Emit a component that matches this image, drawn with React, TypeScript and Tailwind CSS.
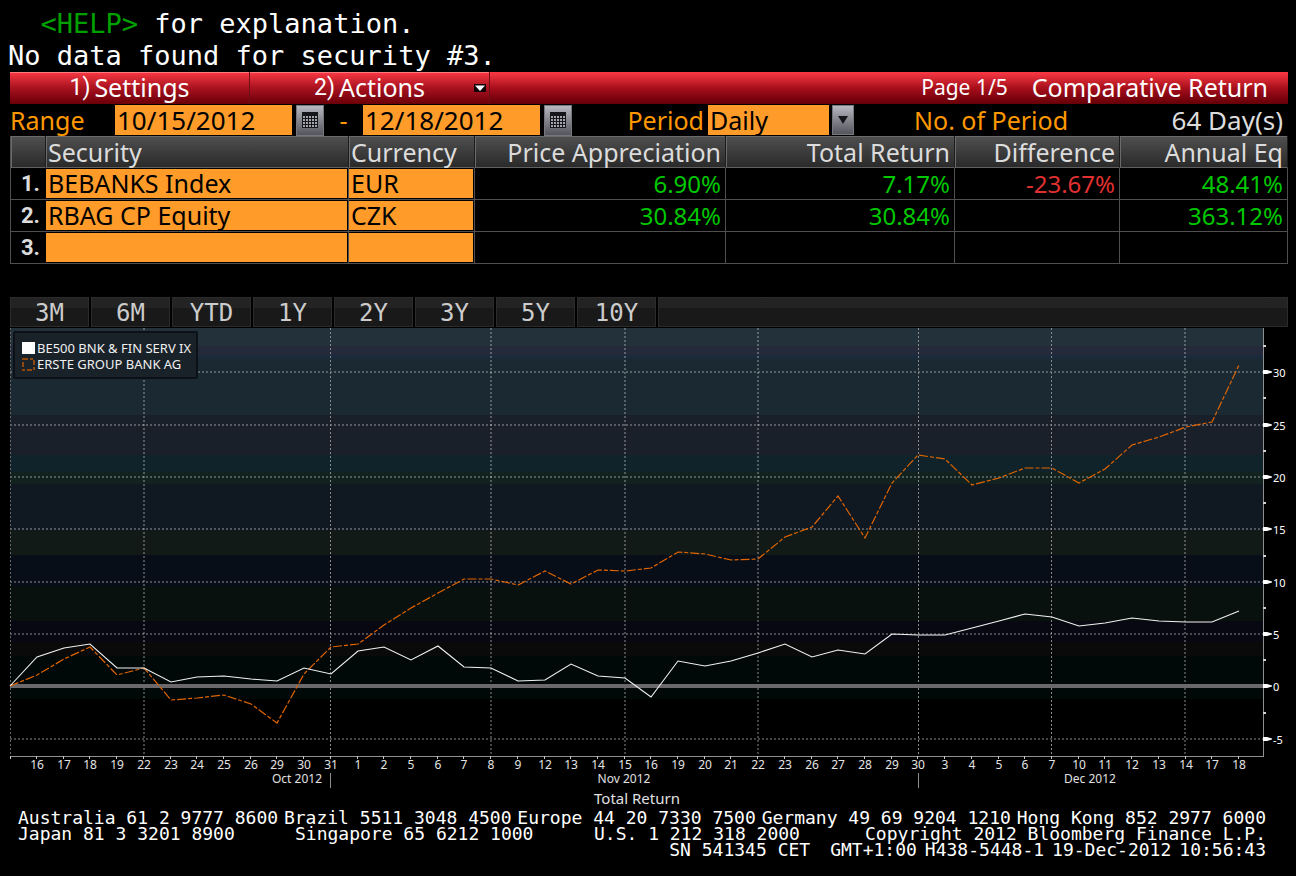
import React from "react";

const MONO = "font-['DejaVu_Sans_Mono',monospace]";

const DAYS = [
  "", "16", "17", "18", "19", "22", "23", "24", "25", "26", "29", "30", "31",
  "1", "2", "5", "6", "7", "8", "9", "12", "13", "14", "15", "16", "19", "20", "21", "22", "23",
  "26", "27", "28", "29", "30", "3", "4", "5", "6", "7", "10", "11", "12", "13", "14", "17", "18",
];

const BANK_INDEX = [
  686, 657, 648, 644, 668, 668, 682, 677, 676, 679, 681, 668, 674, 651, 647, 660, 646, 667, 668,
  681, 680, 664, 676, 678, 697, 661, 666, 661, 653, 644, 657, 650, 654, 634, 635, 635, 628, 621,
  614, 617, 626, 623, 618, 621, 622, 622, 611,
];

const ERSTE = [
  686, 675, 659, 647, 675, 668, 700, 698, 695, 704, 723, 674, 647, 644, 625, 608, 593, 579, 579,
  585, 571, 584, 570, 571, 568, 552, 554, 560, 559, 537, 527, 496, 538, 483, 455, 459, 485, 478,
  468, 468, 483, 469, 445, 437, 427, 422, 365,
];

const BANDS: [number, number, string][] = [
  [328, 346, "#23323a"],
  [346, 355, "#242a39"],
  [355, 358, "#1a2b3f"],
  [358, 415, "#1b2a32"],
  [415, 455, "#1a202a"],
  [455, 472, "#10222a"],
  [472, 484, "#12221f"],
  [484, 530, "#101822"],
  [530, 555, "#121a18"],
  [555, 586, "#080e17"],
  [586, 621, "#09110f"],
  [621, 642, "#080812"],
  [642, 656, "#0b0a0a"],
  [656, 699, "#010808"],
];

const LEVELS: [number, string][] = [
  [372, "30"], [425, "25"], [477, "20"], [529, "15"], [582, "10"], [634, "5"], [686, "0"], [739, "-5"],
];

const MINOR = [346, 398, 451, 503, 556, 608, 660, 713];
const WEEKS = [144, 491, 625, 758, 1185];
const MONTHS = [331, 919, 1052];

const xAt = (i: number) => Math.round(10.3 + i * 26.71);
const toPoints = (ys: number[]) => ys.map((y, i) => `${xAt(i)},${y}`).join(" ");

function ReturnChart() {
  return (
    <svg viewBox="0 328 1296 480" className="block w-full font-['Noto_Sans',sans-serif]" role="img" aria-label="Total return chart">
      {BANDS.map(([top, bottom, fill]) => (
        <rect key={top} x="10" y={top} width="1253" height={bottom - top} fill={fill} />
      ))}
      <g stroke="#ffffff" strokeOpacity="0.27" strokeWidth="2" strokeDasharray="2 2" shapeRendering="crispEdges">
        {LEVELS.filter(([, t]) => t !== "0").map(([y]) => (
          <line key={y} x1="10" x2="1263" y1={y} y2={y} />
        ))}
        {WEEKS.map((x) => (
          <line key={x} x1={x} x2={x} y1="328" y2="756" />
        ))}
      </g>
      <g stroke="#8a8a8a" strokeDasharray="2 2" shapeRendering="crispEdges">
        <line x1="10.5" x2="10.5" y1="328" y2="756" stroke="#666666" />
        {MONTHS.map((x) => (
          <line key={x} x1={x - 0.5} x2={x - 0.5} y1="328" y2="756" />
        ))}
      </g>
      <rect x="10" y="684" width="1253" height="4" fill="#6a686a" />
      <polyline points={toPoints(ERSTE)} fill="none" stroke="#e06400" strokeWidth="1.2" strokeDasharray="9 2 4 2" />
      <polyline points={toPoints(BANK_INDEX)} fill="none" stroke="#f2f2f2" strokeWidth="1.1" />
      <g stroke="#8f8f8f" shapeRendering="crispEdges">
        <line x1="10" x2="1264" y1="756.5" y2="756.5" />
        <line x1="1263.5" x2="1263.5" y1="328" y2="757" />
        <line x1="330.5" x2="330.5" y1="773" y2="788" />
        <line x1="918.5" x2="918.5" y1="773" y2="788" />
      </g>
      {MINOR.map((y) => (
        <rect key={y} x="1263" y={y - 1} width="3" height="2" fill="#d0d0d0" />
      ))}
      {LEVELS.map(([y, label]) => (
        <g key={y} fill="#ffffff">
          <path d={`M1263 ${y - 2}h4l5 1.500v1l-5 1.500h-4z`} />
          <text x="1273" y={y + 5} fontSize="11">{label}</text>
        </g>
      ))}
      {DAYS.map((d, i) => (
        <g key={i}>
          <rect x={xAt(i) - (i ? 1 : 0)} y="756" width="1" height="3" fill="#c8c8c8" />
          <text x={xAt(i)} y="769" fontSize="12" textAnchor="middle" fill="#e4e4e4">{d}</text>
        </g>
      ))}
      <g fontSize="12" textAnchor="middle" fill="#e0e0e0">
        <text x="297" y="783">Oct 2012</text>
        <text x="624" y="783">Nov 2012</text>
        <text x="1090" y="783">Dec 2012</text>
        <text x="637" y="804" fontSize="15">Total Return</text>
      </g>
    </svg>
  );
}

function CalendarButton({ label }: { label: string }) {
  return (
    <button
      type="button"
      aria-label={label}
      className="ml-1 flex h-[31px] w-7 shrink-0 items-center justify-center border border-[#77777f] bg-linear-to-b from-[#b8b8c0] to-[#55555e]"
    >
      <svg width="16" height="16" viewBox="0 0 16 16" shapeRendering="crispEdges" aria-hidden="true">
        <rect x="0" y="0" width="16" height="16" fill="#15151a" />
        {[4, 7, 10, 13].map((y) =>
          [1, 4, 7, 10, 13].map((x) => <rect key={`${x}-${y}`} x={x} y={y} width="2" height="2" fill="#a5a5ad" />)
        )}
      </svg>
    </button>
  );
}

function MenuButton({ num, text, arrow }: { num: string; text: string; arrow?: boolean }) {
  return (
    <button
      type="button"
      className="relative flex h-8 w-60 items-center justify-center gap-1 border-r border-[#6d1018] bg-linear-to-b from-[#fb3945] via-[#b01522] via-45% to-[#6a0008] shadow-[inset_0_1px_0_#ff7a80]"
    >
      <span className="font-[Roboto,sans-serif] text-[23px]">{num}</span>
      <span>{text}</span>
      {arrow && (
        <svg className="absolute top-3 right-[3px]" width="12" height="8" viewBox="0 0 12 8" aria-hidden="true">
          <rect width="12" height="8" fill="#120406" />
          <path d="M1 1.500h10L6 7z" fill="#ffffff" />
        </svg>
      )}
    </button>
  );
}

type Row = { security: string; currency: string; price: string; total: string; diff: string; annual: string };

const ROWS: Row[] = [
  { security: "BEBANKS Index", currency: "EUR", price: "6.90%", total: "7.17%", diff: "-23.67%", annual: "48.41%" },
  { security: "RBAG CP Equity", currency: "CZK", price: "30.84%", total: "30.84%", diff: "", annual: "363.12%" },
  { security: "", currency: "", price: "", total: "", diff: "", annual: "" },
];

const COLS: [string, string, string][] = [
  ["", "w-[35px]", "text-left"],
  ["Security", "w-[303px]", "text-left"],
  ["Currency", "w-[126px]", "text-left"],
  ["Price Appreciation", "w-[251px]", "text-right"],
  ["Total Return", "w-[229px]", "text-right"],
  ["Difference", "w-[165px]", "text-right"],
  ["Annual Eq", "w-[168px]", "text-right"],
];

const FIELD = "block h-[29px] w-full rounded-none bg-[#ff9b29] px-[2px] py-0 leading-[29px] text-black outline-none";
const CELL = "border-b border-r border-[#505050] p-0";

function ReturnsTable() {
  return (
    <table className="w-full table-fixed border-separate border-spacing-0 border-l border-[#505050]">
      <thead>
        <tr>
          {COLS.map(([name, width, align]) => (
            <th
              key={name}
              scope="col"
              className={`${width} ${align} h-8 border-b border-r border-b-[#606060] border-r-[#1c1c1c] bg-linear-to-b from-[#505050] to-[#2a2a2a] py-0 pr-1 pl-[2px] font-normal leading-[30px] whitespace-nowrap text-[#dcdcdc] shadow-[inset_1px_1px_0_#6b6b6b]`}
            >
              {name}
            </th>
          ))}
        </tr>
      </thead>
      <tbody>
        {ROWS.map((r, i) => (
          <tr key={i} className="h-8">
            <th scope="row" className="border-b border-[#505050] p-0 pr-[6px] text-right font-[Roboto,sans-serif] text-[22px] leading-[30px] text-[#dcdcdc]">
              {i + 1}.
            </th>
            <td className={`${CELL} pr-px`}>
              <input aria-label={`Security ${i + 1}`} defaultValue={r.security} className={FIELD} />
            </td>
            <td className={`${CELL} pr-px`}>
              <input aria-label={`Currency ${i + 1}`} defaultValue={r.currency} className={FIELD} />
            </td>
            <td className={`${CELL} pr-1 text-right text-2xl leading-[30px] text-[#00c800]`}>{r.price}</td>
            <td className={`${CELL} pr-1 text-right text-2xl leading-[30px] text-[#00c800]`}>{r.total}</td>
            <td className={`${CELL} pr-1 text-right text-2xl leading-[30px] text-[#e03030]`}>{r.diff}</td>
            <td className={`${CELL} pr-1 text-right text-2xl leading-[30px] text-[#00c800]`}>{r.annual}</td>
          </tr>
        ))}
      </tbody>
    </table>
  );
}

const DATE_FIELD = "h-[30px] w-[177px] rounded-none bg-[#ff9b29] px-[2px] py-0 text-[26px] leading-[30px] text-black outline-none";

export default function App() {
  return (
    <main className="min-h-screen bg-black pt-2 font-['Noto_Sans',sans-serif] text-[25px] text-white">
      <div className={`${MONO} pl-2 text-[27px] leading-8 whitespace-pre`}>
        <p>{"  "}<span className="text-[#00a000]">&lt;HELP&gt;</span>{" for explanation."}</p>
        <p>No data found for security #3.</p>
      </div>

      <div className="pr-2 pl-[10px]">
        <header className="flex h-8 items-center bg-linear-to-b from-[#fb3945] via-[#a80f1b] via-50% to-[#650008]">
          <MenuButton num="1)" text="Settings" />
          <MenuButton num="2)" text="Actions" arrow />
          <span className="ml-auto text-[21px]">Page 1/5</span>
          <h1 className="mr-5 ml-6">Comparative Return</h1>
        </header>

        <form className="flex h-8 items-center leading-8 text-[#ff9800]">
          <label htmlFor="from" className="w-[105px]">Range</label>
          <input id="from" defaultValue="10/15/2012" className={DATE_FIELD} />
          <CalendarButton label="Pick start date" />
          <label htmlFor="to" className="w-[39px] text-center" aria-label="Range end">-</label>
          <input id="to" defaultValue="12/18/2012" className={DATE_FIELD} />
          <CalendarButton label="Pick end date" />
          <label htmlFor="period" className="w-[136px] pr-1 text-right">Period</label>
          <select id="period" defaultValue="Daily" className="h-[30px] w-[121px] appearance-none rounded-none bg-[#ff9b29] px-[2px] py-0 leading-[30px] text-black outline-none">
            <option>Daily</option>
            <option>Weekly</option>
            <option>Monthly</option>
          </select>
          <button type="button" aria-label="Open period list" className="ml-[3px] flex h-[30px] w-[22px] items-center justify-center border border-[#77777f] bg-linear-to-b from-[#b8b8c0] to-[#55555e]">
            <svg width="10" height="8" viewBox="0 0 10 8" aria-hidden="true"><path d="M0 0h10L5 8z" fill="#15151a" /></svg>
          </button>
          <span className="ml-[60px]">No. of Period</span>
          <span className="mr-[5px] ml-auto text-[26px] text-[#dcdcdc]">64 Day(s)</span>
        </form>

        <ReturnsTable />

        <nav className={`${MONO} mt-[33px] mb-px flex h-[30px] gap-[2px] text-2xl text-[#cccccc]`} aria-label="Chart range">
          {["3M", "6M", "YTD", "1Y", "2Y", "3Y", "5Y", "10Y"].map((p) => (
            <button key={p} type="button" className="w-[79px] border border-[#2b2b2b] bg-linear-to-b from-[#232323] from-35% to-[#191919] to-35% leading-[30px]">
              {p}
            </button>
          ))}
          <div className="flex-1 border border-[#2b2b2b] bg-linear-to-b from-[#232323] from-35% to-[#191919] to-35%" />
        </nav>
      </div>

      <section className="relative">
        <ReturnChart />
        <ul className="absolute top-[3px] left-[13px] rounded-xs border-2 border-[#0b1116] bg-[#192129] pt-[7px] pr-[5px] pb-[5px] pl-[7px] text-[13px] leading-4 text-[#f0f0f0]">
          <li className="flex items-center gap-[2px]">
            <svg width="13" height="13" aria-hidden="true"><rect width="13" height="12" fill="#ffffff" /></svg>
            BE500 BNK &amp; FIN SERV IX
          </li>
          <li className="flex items-center gap-[2px]">
            <svg width="13" height="13" aria-hidden="true"><rect x="1" y="1" width="11" height="11" fill="none" stroke="#8f470c" strokeWidth="2" strokeDasharray="5 2 3 2" /></svg>
            ERSTE GROUP BANK AG
          </li>
        </ul>
      </section>

      <footer className={`${MONO} mt-[2px] pr-[30px] pl-[18px] text-lg leading-4 whitespace-nowrap`}>
        <div className="flex justify-between">
          <span>Australia 61 2 9777 8600</span>
          <span>Brazil 5511 3048 4500</span>
          <span>Europe 44 20 7330 7500</span>
          <span>Germany 49 69 9204 1210</span>
          <span>Hong Kong 852 2977 6000</span>
        </div>
        <div className="grid grid-cols-[277fr_299fr_269fr_403fr]">
          <span>Japan 81 3 3201 8900</span>
          <span>Singapore 65 6212 1000</span>
          <span>U.S. 1 212 318 2000</span>
          <span className="text-right">Copyright 2012 Bloomberg Finance L.P.</span>
        </div>
        <div className="flex justify-end gap-2">
          <span className="mr-3">SN 541345 CET</span>
          <span>GMT+1:00</span>
          <span>H438-5448-1</span>
          <span>19-Dec-2012</span>
          <span>10:56:43</span>
        </div>
      </footer>
    </main>
  );
}
